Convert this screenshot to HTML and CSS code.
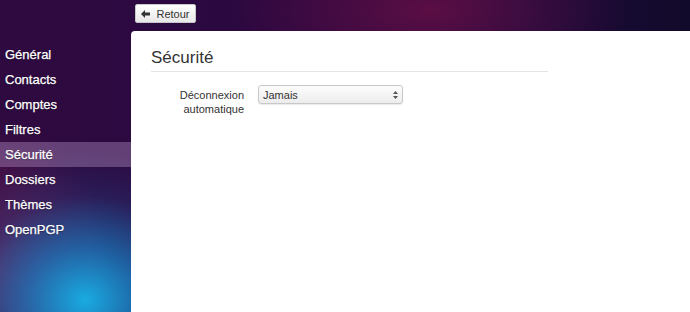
FILE: index.html
```html
<!DOCTYPE html>
<html>
  <head>
    <meta charset="utf-8">
    <title>Paramètres</title>
    <link rel="stylesheet" href="styles.css">
  </head>
  <body>
    <div id="topbar">
      <button class="back_button">
        <svg width="9" height="8" viewBox="0 0 9 8"><path d="M0 4 L4 0 L4 2.5 L9 2.5 L9 5.5 L4 5.5 L4 8 Z" fill="#333"/></svg>
        Retour
      </button>
    </div>
    <div id="layout">
      <ul id="menu">
        <li>Général</li>
        <li>Contacts</li>
        <li>Comptes</li>
        <li>Filtres</li>
        <li class="selected">Sécurité</li>
        <li>Dossiers</li>
        <li>Thèmes</li>
        <li>OpenPGP</li>
      </ul>
      <div id="panel">
        <h2 class="legend">Sécurité</h2>
        <div class="form_row">
          <label class="form_label">Déconnexion automatique</label>
          <div class="select_box">
            <span>Jamais</span>
            <svg width="5" height="8" viewBox="0 0 5 8"><path d="M0 3 L2.5 0 L5 3 Z M0 5 L5 5 L2.5 8 Z" fill="#555"/></svg>
          </div>
        </div>
      </div>
    </div>
  </body>
</html>
```

FILE: styles.css
```css
html, body {
  height: 100%;
}

body {
  margin: 0;
  font-family: 'Liberation Sans', Arial, sans-serif;
  overflow: hidden;
  background:
    radial-gradient(ellipse 170px 150px at 85px 300px, rgba(25, 170, 225, 1) 0, rgba(25, 130, 200, 0.7) 35%, rgba(35, 70, 140, 0.3) 70%, rgba(30, 60, 130, 0) 100%),
    radial-gradient(ellipse 110px 150px at 0 270px, rgba(115, 30, 85, 0.8), rgba(110, 30, 80, 0)),
    radial-gradient(ellipse 200px 90px at 430px 10px, rgba(110, 15, 70, 0.75), rgba(110, 15, 70, 0)),
    linear-gradient(90deg, #2e0a40 0, #2a0840 300px, #1c0a3c 520px, #120a2a 690px);
}

#topbar {
  height: 31px;
  padding-left: 135px;
  box-sizing: border-box;
  padding-top: 4px;
}

.back_button {
  height: 19px;
  width: 61px;
  padding: 0;
  font-family: inherit;
  font-size: 11px;
  color: #333;
  border: 1px solid #c8c8c8;
  border-radius: 2px;
  background: linear-gradient(#ffffff, #e8e8e8);
  display: flex;
  align-items: center;
  justify-content: center;
  gap: 6px;
}

#layout {
  display: flex;
  height: calc(100% - 31px);
}

#menu {
  width: 131px;
  margin: 0;
  padding: 11px 0 0;
  list-style: none;
}

#menu li {
  height: 25px;
  line-height: 25px;
  padding-left: 5px;
  font-size: 13px;
  color: #fff;
  -webkit-text-stroke: 0.25px #fff;
  text-shadow: 0 1px 1px rgba(0, 0, 0, 0.4);
}

#menu li.selected {
  background: rgba(200, 170, 220, 0.35);
}

#panel {
  flex: 1;
  background: #fff;
  border-top-left-radius: 4px;
  padding: 0 20px;
}

.legend {
  width: 397px;
  margin: 17px 0 0;
  padding-bottom: 3px;
  font-size: 17px;
  font-weight: normal;
  color: #333;
  border-bottom: 1px solid #e5e5e5;
}

.form_row {
  display: flex;
  margin-top: 13px;
  gap: 14px;
}

.form_label {
  width: 93px;
  text-align: right;
  font-size: 11px;
  line-height: 14px;
  color: #333;
  padding-top: 3px;
}

.select_box {
  width: 145px;
  height: 19px;
  box-sizing: border-box;
  border: 1px solid #c8c8c8;
  border-radius: 3px;
  background: linear-gradient(#fdfdfd, #ececec);
  box-shadow: 0 1px 1px rgba(0, 0, 0, 0.08);
  display: flex;
  align-items: center;
  justify-content: space-between;
  padding: 0 4px;
  font-size: 11px;
  color: #333;
}
```
